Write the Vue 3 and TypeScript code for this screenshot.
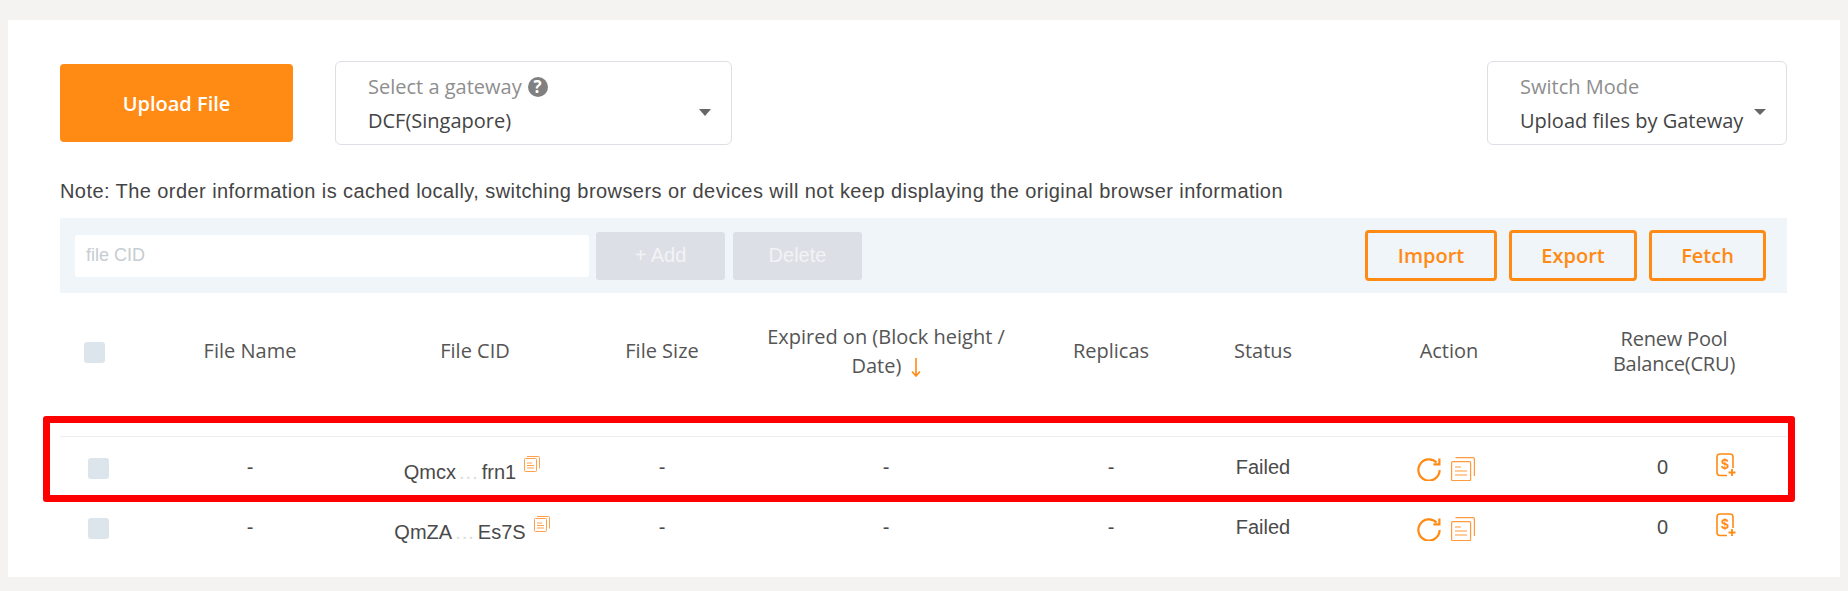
<template>
  <div class="page">
    <div class="panel">
      <div class="top-row">
        <button class="upload-btn">Upload File</button>
        <div class="select gateway">
          <div class="select-label">Select a gateway <span class="help">?</span></div>
          <div class="select-value">DCF(Singapore)</div>
          <span class="caret"></span>
        </div>
        <div class="select mode">
          <div class="select-label">Switch Mode</div>
          <div class="select-value">Upload files by Gateway</div>
          <span class="caret"></span>
        </div>
      </div>

      <p class="note">Note: The order information is cached locally, switching browsers or devices will not keep displaying the original browser information</p>

      <div class="toolbar">
        <input class="cid-input" placeholder="file CID" />
        <button class="grey-btn add">+ Add</button>
        <button class="grey-btn delete">Delete</button>
        <div class="toolbar-right">
          <button class="line-btn import">Import</button>
          <button class="line-btn export">Export</button>
          <button class="line-btn fetch">Fetch</button>
        </div>
      </div>

      <div class="table-head grid">
        <div><span class="check"></span></div>
        <div>File Name</div>
        <div>File CID</div>
        <div>File Size</div>
        <div class="expired">
          Expired on (Block height / Date)
          <svg class="sort" width="10" height="19" viewBox="0 0 10 19" fill="none" stroke="#ff8a14" stroke-width="1.6">
            <path d="M5 0v17.5M1 13.5l4 4.5 4-4.5" />
          </svg>
        </div>
        <div>Replicas</div>
        <div>Status</div>
        <div class="action-head">Action</div>
        <div class="renew-head">Renew Pool Balance(CRU)</div>
      </div>

      <div class="rows">
        <div v-for="row in rows" :key="row.start" class="row grid">
          <div class="row-check"><span class="check"></span></div>
          <div>-</div>
          <div class="cid-cell">
            <span class="cid-text">{{ row.start }}<span class="dots">...</span>{{ row.end }}</span>
            <svg class="cid-copy" width="16" height="16" viewBox="0 0 16 16" fill="none" stroke="#ffa04a" stroke-width="1">
              <rect x="0.5" y="2.5" width="12" height="13" rx="1" />
              <path d="M3 .5h11.5a1 1 0 0 1 1 1v11M3 7h5M3 9.5h7M3 12h7" />
            </svg>
          </div>
          <div>-</div>
          <div>-</div>
          <div>-</div>
          <div class="status">Failed</div>
          <div class="actions">
            <svg width="24" height="24" viewBox="0 0 24 24" fill="none" stroke="#ff8a14" stroke-width="2.2">
              <path d="M19.6 5.6A10.6 10.6 0 1 0 22.6 13" />
              <path d="M22.4 1.6v5.8h-6" />
            </svg>
            <svg width="24" height="24" viewBox="0 0 24 24" fill="none" stroke="#ff9a3e" stroke-width="1.2">
              <rect x="0.6" y="4.6" width="19" height="19" rx="1.2" />
              <path d="M4.5 .6h17.5a1.4 1.4 0 0 1 1.4 1.4v17M4 10h6M4 14h12M4 18h12" />
            </svg>
          </div>
          <div class="renew">
            <span class="balance">0</span>
            <svg class="renew-icon" width="20" height="24" viewBox="0 0 20 24" fill="none" stroke="#ff8a14" stroke-width="1.6">
              <path d="M11 22.5H4a3 3 0 0 1-3-3V4a3 3 0 0 1 3-3h10a3 3 0 0 1 3 3v11" />
              <text x="9" y="16" text-anchor="middle" class="dollar">$</text>
              <path d="M12.5 19.5h7M16 16v7" stroke-width="1.8" />
            </svg>
          </div>
        </div>
      </div>

      <div class="highlight"></div>
    </div>
  </div>
</template>

<script setup lang="ts">
interface FileRow {
  start: string;
  end: string;
}

const rows: FileRow[] = [
  { start: 'Qmcx', end: 'frn1' },
  { start: 'QmZA', end: 'Es7S' },
];
</script>

<style>
html,
body {
  margin: 0;
  background: #f4f3f1;
}
</style>

<style scoped>
.page {
  height: 591px;
  padding: 20px 8px 14px;
  box-sizing: border-box;
  font-family: "Open Sans", sans-serif;
  color: #444;
}

.panel {
  position: relative;
  height: 557px;
  box-sizing: border-box;
  padding: 41px 53px 20px 52px;
  background: #fff;
}

.top-row {
  display: flex;
  align-items: center;
  height: 84px;
}

.upload-btn {
  width: 233px;
  height: 78px;
  margin-right: 42px;
  border: none;
  border-radius: 4px;
  background: #ff8a14;
  color: #fff;
  font: 600 20px "Open Sans", sans-serif;
}

.select {
  position: relative;
  box-sizing: border-box;
  height: 84px;
  padding: 8px 0 0 32px;
  border: 1px solid #dcdfe6;
  border-radius: 6px;
  font-size: 20px;
  line-height: 34px;
}

.gateway {
  width: 397px;
}

.mode {
  width: 300px;
  margin-left: auto;
}

.select-label {
  display: flex;
  align-items: center;
  gap: 6px;
  height: 34px;
  color: #8e8e8e;
}

.select-value {
  color: #444;
}

.help {
  display: inline-block;
  flex-shrink: 0;
  width: 20px;
  height: 20px;
  border-radius: 50%;
  background: #808080;
  color: #fff;
  font-size: 17px;
  font-weight: 700;
  line-height: 20px;
  text-align: center;
}

.caret {
  position: absolute;
  right: 20px;
  top: 47px;
  width: 0;
  height: 0;
  border-left: 6px solid transparent;
  border-right: 6px solid transparent;
  border-top: 7px solid #666;
}

.mode .caret {
  right: 20px;
  top: 47px;
  border-top-width: 6px;
}

.note {
  margin: 33px 0 13px;
  font: 20px/27px "Liberation Sans", Arial, sans-serif;
  letter-spacing: 0.43px;
  color: #444;
}

.toolbar {
  display: flex;
  align-items: center;
  height: 75px;
  padding: 0 21px 0 15px;
  background: #f0f5f9;
}

.cid-input {
  box-sizing: border-box;
  width: 514px;
  height: 42px;
  margin-right: 7px;
  padding: 0 11px;
  border: none;
  border-radius: 3px;
  background: #fff;
  font: 18px "Liberation Sans", Arial, sans-serif;
  outline: none;
}

.cid-input::placeholder {
  color: #c6ccd2;
}

.grey-btn {
  width: 129px;
  height: 48px;
  margin-right: 8px;
  border: none;
  border-radius: 3px;
  background: #dcdfe6;
  color: #f2f3f5;
  font: 20px "Liberation Sans", Arial, sans-serif;
}

.toolbar-right {
  display: flex;
  gap: 12px;
  margin-left: auto;
}

.line-btn {
  box-sizing: border-box;
  height: 51px;
  border: 3px solid #ff8a14;
  border-radius: 4px;
  background: transparent;
  color: #ff8a14;
  font: 600 20px "Open Sans", sans-serif;
}

.import {
  width: 132px;
}

.export {
  width: 128px;
}

.fetch {
  width: 117px;
}

.grid {
  display: grid;
  grid-template-columns: 69px 242px 208px 166px 282px 168px 136px 236px 220px;
  align-items: center;
  text-align: center;
}

.table-head {
  height: 115px;
  margin-bottom: 28px;
  font-size: 20px;
  line-height: 29px;
  color: #555;
}

.expired {
  padding: 0 6px;
}

.sort {
  margin-left: 4px;
  vertical-align: -4px;
}

.renew-head {
  padding: 0 36px 0 30px;
  line-height: 25px;
  letter-spacing: -0.2px;
}

.check {
  display: inline-block;
  width: 21px;
  height: 21px;
  border-radius: 3px;
  background: #dde5ec;
  vertical-align: middle;
}

.rows {
  border-top: 1px solid #eee;
}

.row {
  height: 60px;
  font: 20px/26px "Liberation Sans", Arial, sans-serif;
  color: #4a4a4a;
}

.row-check {
  padding-left: 8px;
}

.cid-cell {
  display: flex;
  justify-content: center;
  align-items: flex-start;
  gap: 8px;
  padding: 9px 6px 0 0;
}

.cid-copy {
  margin-top: -3px;
}

.dots {
  padding: 0 3px;
  letter-spacing: 1px;
  color: #dcdcdc;
}

.actions {
  display: flex;
  justify-content: center;
  align-items: center;
  gap: 10px;
  padding: 4px 6px 0 0;
}

.renew {
  display: flex;
  align-items: center;
  padding-left: 90px;
}

.renew-icon {
  margin: -4px 0 0 48px;
}

.dollar {
  fill: #ff8a14;
  stroke: none;
  font: 700 14px "Liberation Sans", Arial, sans-serif;
}

.highlight {
  position: absolute;
  left: 35px;
  top: 396px;
  box-sizing: border-box;
  width: 1752px;
  height: 86px;
  border: 7px solid #ff0000;
  border-radius: 3px;
  pointer-events: none;
}
</style>
